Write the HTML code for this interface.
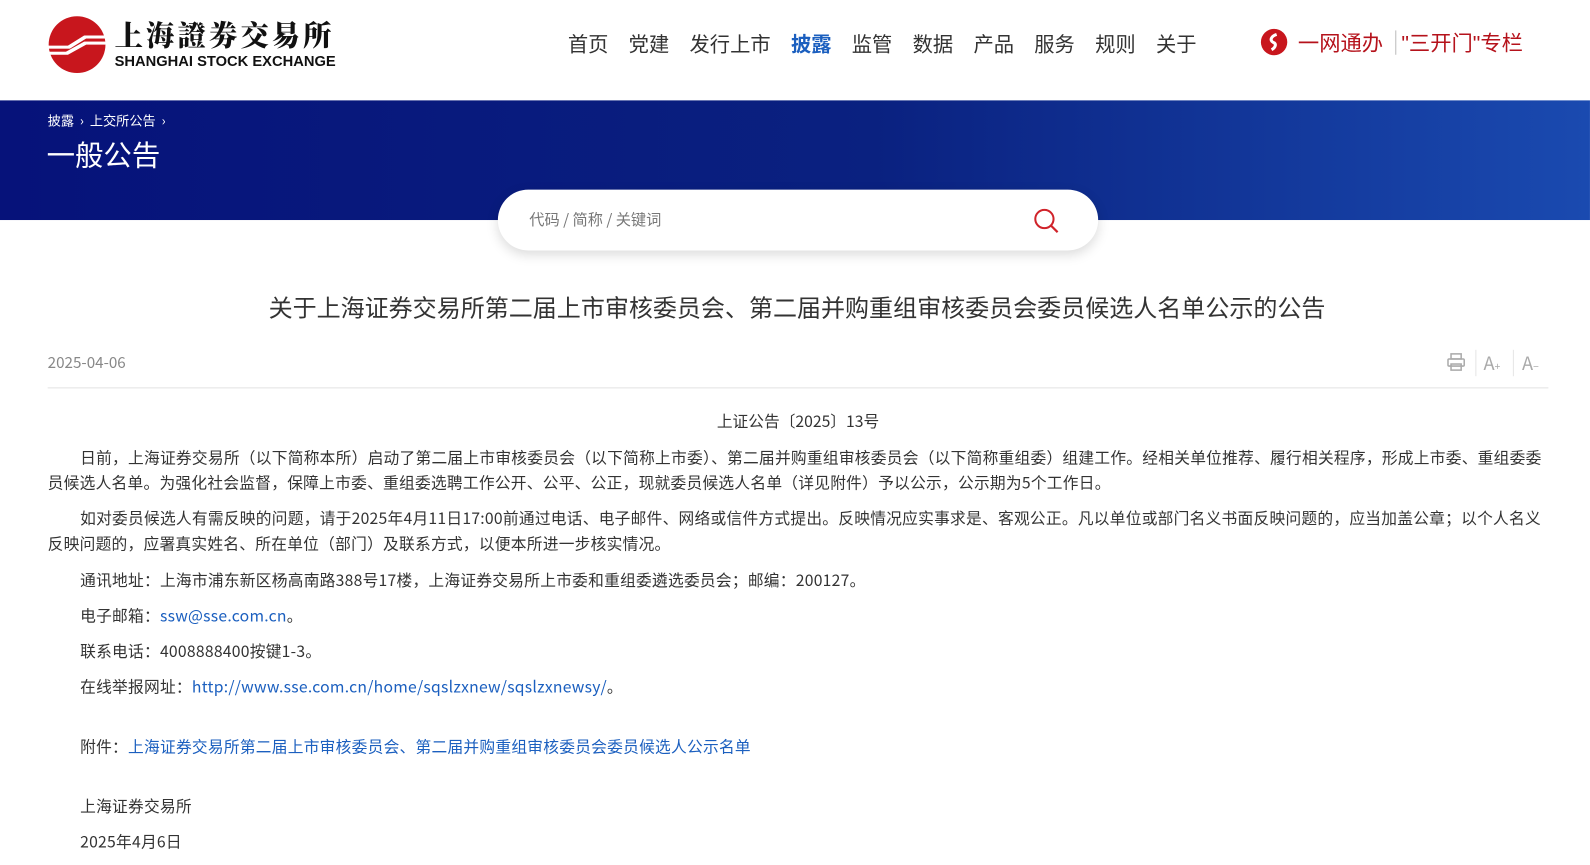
<!DOCTYPE html>
<html><head><meta charset="utf-8"><style>
*{margin:0;padding:0;box-sizing:border-box}
body{width:1590px;height:865px;overflow:hidden;background:#fff;font-family:"Noto Sans CJK SC","Liberation Sans",sans-serif;color:#333;position:relative}
#w{position:absolute;left:0;top:0;width:1568px;height:853px;transform:scale(1.014);transform-origin:0 0}
.a{position:absolute;white-space:nowrap}
.nav span{margin-right:20px}
.banner{position:absolute;left:0;top:99px;width:1568px;height:118px;background:linear-gradient(90deg,#06127a 0%,#0a2180 55%,#1a4ab0 100%)}
.p{position:absolute;left:47px;width:1480px;font-size:15.5px;letter-spacing:0.25px;line-height:25px;color:#333}
a{color:#1b5fbf;text-decoration:none}
.q{font-family:"Liberation Sans",sans-serif}
</style></head><body><div id="w">
<svg class="a" style="left:47px;top:15px" width="58" height="58" viewBox="0 0 58 58">
<circle cx="29" cy="29" r="28" fill="#c8161d"/>
<g fill="#fff"><rect x="0" y="30" width="22" height="3"/><rect x="0" y="36" width="20" height="3"/><rect x="36" y="20" width="22" height="3"/><rect x="36" y="26" width="22" height="3"/>
<polygon points="20,30 36,20 38,23 22,33"/><polygon points="18,36 36,26 38,29 20,39"/></g></svg>
<div class="a" style="left:113px;top:16px;font-size:28px;font-family:'Noto Serif CJK SC',serif;font-weight:900;color:#111;letter-spacing:3px;line-height:36px">上海證劵交易所</div>
<div class="a" style="left:113px;top:53px;font-size:14.5px;font-weight:bold;color:#111;font-family:'Liberation Sans',sans-serif">SHANGHAI STOCK EXCHANGE</div>
<div class="a nav" style="left:560px;top:28px;font-size:20px;color:#333">
<span>首页</span><span>党建</span><span>发行上市</span><span style="color:#1b5fbf;font-weight:bold">披露</span><span>监管</span><span>数据</span><span>产品</span><span>服务</span><span>规则</span><span>关于</span></div>
<svg class="a" style="left:1243px;top:28px" width="27" height="27" viewBox="0 0 27 27"><circle cx="13.5" cy="13.5" r="13" fill="#c8161d"/><path d="M16 6 C10 8 9 12 13 14 C16 15 15 19 11 21" stroke="#fff" stroke-width="3" fill="none"/></svg>
<div class="a" style="left:1280px;top:27px;font-size:21px;color:#b5121b">一网通办</div>
<div class="a" style="left:1376px;top:30px;width:1px;height:24px;background:#bbb"></div>
<div class="a" style="left:1382px;top:27px;font-size:21px;color:#b5121b"><span class="q">"</span>三开门<span class="q">"</span>专栏</div>
<div class="banner"></div>
<div class="a" style="left:47px;top:109px;font-size:13px;color:#fff">披露 &nbsp;›&nbsp; 上交所公告 &nbsp;›</div>
<div class="a" style="left:46px;top:132px;font-size:28px;color:#fff">一般公告</div>
<div class="a" style="left:491px;top:187px;width:592px;height:60px;background:#fff;border-radius:30px;box-shadow:0 4px 12px rgba(0,0,0,.15)"></div>
<div class="a" style="left:522px;top:206px;font-size:15px;color:#777">代码 / 简称 / 关键词</div>
<svg class="a" style="left:1018px;top:204px" width="28" height="28" viewBox="0 0 28 28"><circle cx="12" cy="12" r="9" stroke="#d0232a" stroke-width="2" fill="none"/><line x1="18.5" y1="18.5" x2="25" y2="25" stroke="#d0232a" stroke-width="2.2"/></svg>
<div class="a" style="left:0;width:1572px;text-align:center;top:285px;font-size:23.7px;color:#333">关于上海证券交易所第二届上市审核委员会、第二届并购重组审核委员会委员候选人名单公示的公告</div>
<div class="a" style="left:47px;top:347px;font-size:15px;color:#888">2025-04-06</div>
<svg class="a" style="left:1426px;top:347px" width="20" height="20" viewBox="0 0 20 20" fill="none" stroke="#aaa" stroke-width="1.5"><rect x="5" y="2" width="10" height="5"/><rect x="2" y="7" width="16" height="7" rx="1"/><rect x="5" y="12" width="10" height="6"/></svg>
<div class="a" style="left:1455px;top:345px;width:1px;height:26px;background:#e5e5e5"></div>
<div class="a" style="left:1463px;top:345px;font-size:18px;color:#aaa">A<span style="font-size:10px">+</span></div>
<div class="a" style="left:1492px;top:345px;width:1px;height:26px;background:#e5e5e5"></div>
<div class="a" style="left:1501px;top:345px;font-size:18px;color:#aaa">A<span style="font-size:10px">−</span></div>
<div class="a" style="left:47px;top:382px;width:1480px;height:1px;background:#e3e3e3"></div>
<div class="a" style="left:0;width:1574px;text-align:center;top:404px;font-size:15.5px">上证公告〔2025〕13号</div>
<div class="p" style="top:439px;text-indent:32px">日前，上海证券交易所（以下简称本所）启动了第二届上市审核委员会（以下简称上市委）、第二届并购重组审核委员会（以下简称重组委）组建工作。经相关单位推荐、履行相关程序，形成上市委、重组委委员候选人名单。为强化社会监督，保障上市委、重组委选聘工作公开、公平、公正，现就委员候选人名单（详见附件）予以公示，公示期为5个工作日。</div>
<div class="p" style="top:499px;text-indent:32px">如对委员候选人有需反映的问题，请于2025年4月11日17:00前通过电话、电子邮件、网络或信件方式提出。反映情况应实事求是、客观公正。凡以单位或部门名义书面反映问题的，应当加盖公章；以个人名义反映问题的，应署真实姓名、所在单位（部门）及联系方式，以便本所进一步核实情况。</div>
<div class="p" style="top:560px;left:79px">通讯地址：上海市浦东新区杨高南路388号17楼，上海证券交易所上市委和重组委遴选委员会；邮编：200127。</div>
<div class="p" style="top:595px;left:79px">电子邮箱：<a>ssw@sse.com.cn</a>。</div>
<div class="p" style="top:630px;left:79px">联系电话：4008888400按键1-3。</div>
<div class="p" style="top:665px;left:79px">在线举报网址：<a>http://www.sse.com.cn/home/sqslzxnew/sqslzxnewsy/</a>。</div>
<div class="p" style="top:724px;left:79px">附件：<a>上海证券交易所第二届上市审核委员会、第二届并购重组审核委员会委员候选人公示名单</a></div>
<div class="p" style="top:783px;left:79px">上海证券交易所</div>
<div class="p" style="top:818px;left:79px">2025年4月6日</div>
</div></body></html>
